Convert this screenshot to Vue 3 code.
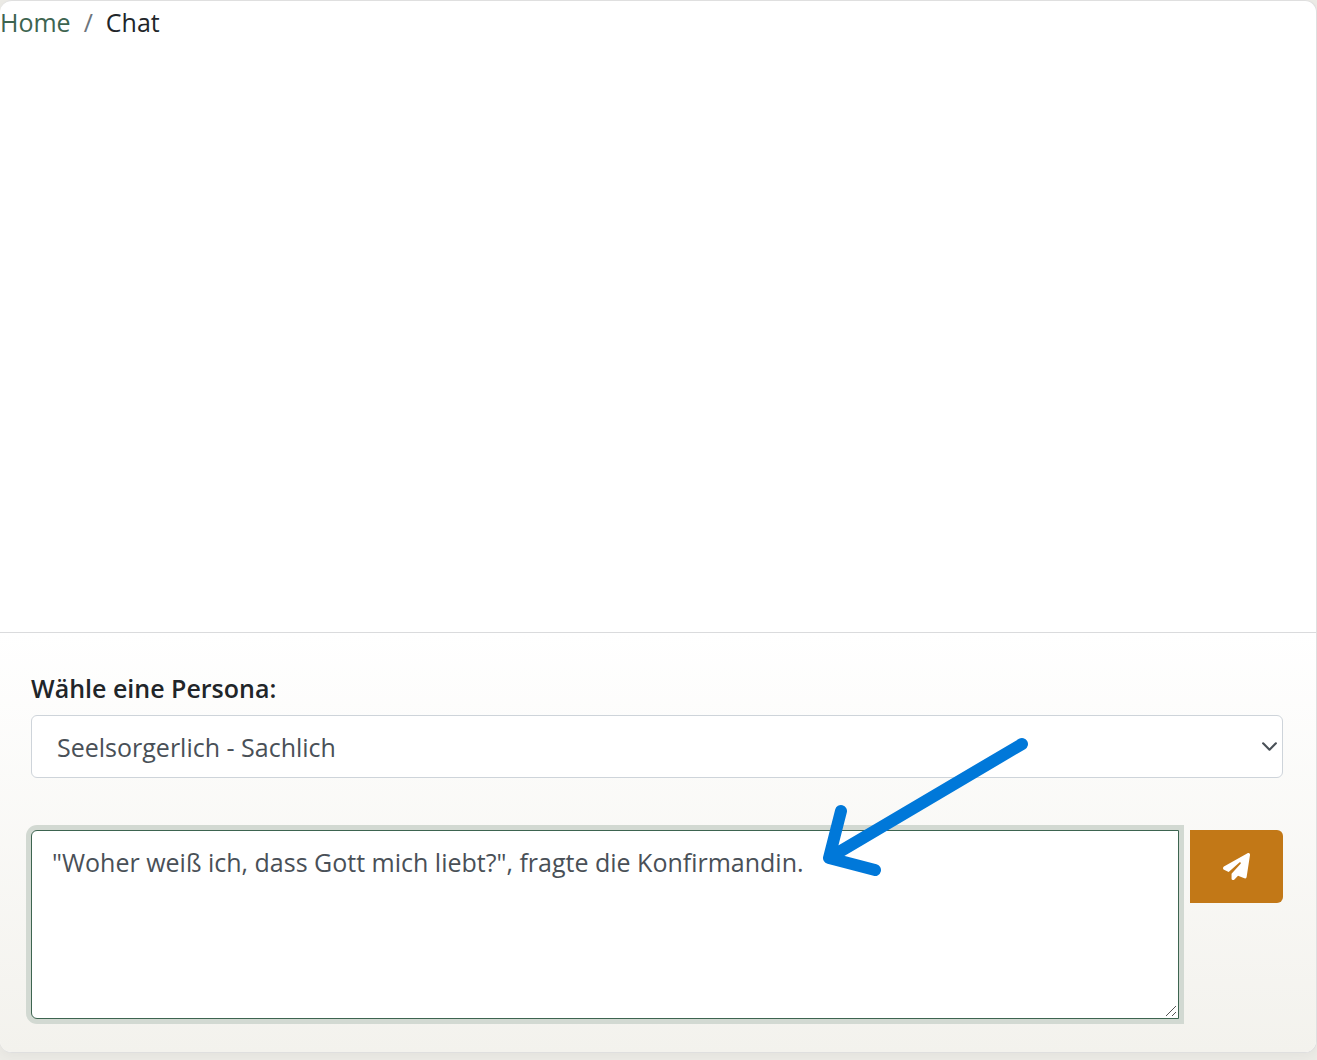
<script setup>
import { ref } from 'vue'

const personas = ['Seelsorgerlich - Sachlich']
const persona = ref(personas[0])
const message = ref('"Woher weiß ich, dass Gott mich liebt?", fragte die Konfirmandin.')
</script>

<template>
  <div class="page">
    <main class="card">
      <nav class="breadcrumb" aria-label="Breadcrumb">
        <a href="#">Home</a>
        <span class="divider">/</span>
        <span class="current">Chat</span>
      </nav>
      <section class="messages" aria-label="Chat"></section>
      <form class="composer" @submit.prevent>
        <label class="persona-label" for="persona">Wähle eine Persona:</label>
        <div class="select-wrap">
          <select id="persona" v-model="persona">
            <option v-for="name in personas" :key="name" :value="name">{{ name }}</option>
          </select>
          <svg class="chevron" viewBox="0 0 16 16" aria-hidden="true">
            <path d="m2 5 6 6 6-6" />
          </svg>
        </div>
        <div class="input-row">
          <div class="message-field">
            <textarea v-model="message" aria-label="Nachricht" spellcheck="false"></textarea>
            <svg class="grip" viewBox="0 0 12 12" aria-hidden="true">
              <path d="M1 11 11 1M7 11l4-4" />
            </svg>
          </div>
          <button type="submit" aria-label="Senden">
            <svg class="plane" viewBox="0 0 512 512" aria-hidden="true">
              <path d="M498 6c11 7 16 20 14 33l-64 416c-2 10-8 18-16 23s-18 5-27 2l-120-50-68 74c-9 10-23 13-35 8s-20-17-20-30v-84c0-4 2-8 4-11l168-183c6-6 5-16-1-22s-15-6-22-1L107 362l-88-45C8 311 0 300 0 288s6-24 17-31L465 4c10-6 23-5 33 2z" />
            </svg>
          </button>
          <svg class="arrow" viewBox="0 0 206 140" aria-hidden="true">
            <path d="M199 7 6 121M18 74 6 121l46 12" />
          </svg>
        </div>
      </form>
    </main>
  </div>
</template>

<style>
body {
  margin: 0;
  background: #eaeae5;
}
</style>

<style scoped>
.page,
.page * {
  box-sizing: border-box;
}

.page {
  display: flex;
  min-height: 100vh;
  padding-bottom: 7px;
  font-family: "Open Sans", "Noto Sans", sans-serif;
  font-size: 25px;
  line-height: 38px;
  color: #212529;
  background: #ecebe6;
}

.card {
  display: flex;
  flex: 1;
  flex-direction: column;
  min-width: 0;
  overflow: hidden;
  border: 1px solid #dfdfdf;
  border-left: 0;
  border-radius: 12px;
  background: #fff;
  box-shadow: 0 3px 12px rgba(0, 0, 0, 0.04);
}

.breadcrumb {
  display: flex;
  gap: 13px;
  padding-top: 2px;
}

.breadcrumb a {
  color: #3d6450;
  text-decoration: none;
}

.divider {
  color: #6c757d;
}

.messages {
  flex: 1;
}

.composer {
  padding: 36px 33px 33px 31px;
  border-top: 1px solid #dadbdd;
  background: linear-gradient(#fff, #f3f2ed);
}

.persona-label {
  display: block;
  margin-bottom: 8px;
  font-weight: 600;
}

.select-wrap {
  position: relative;
  margin-bottom: 52px;
}

select {
  display: block;
  width: 100%;
  height: 63px;
  padding: 0 48px 0 25px;
  border: 1px solid #ced4da;
  border-radius: 6px;
  appearance: none;
  background: #fff;
  color: #495057;
  font: inherit;
}

.chevron {
  position: absolute;
  top: 23px;
  right: 5px;
  width: 17px;
  height: 17px;
  fill: none;
  stroke: #495057;
  stroke-width: 2;
  stroke-linecap: round;
  stroke-linejoin: round;
}

.input-row {
  position: relative;
  display: flex;
  align-items: flex-start;
  gap: 11px;
}

.message-field {
  position: relative;
  flex: 1;
  min-width: 0;
}

textarea {
  display: block;
  width: 100%;
  height: 189px;
  padding: 12px 20px;
  border: 1px solid #3d6450;
  border-radius: 6px 0 0 6px;
  outline: 0;
  background: #fff;
  box-shadow: 0 0 0 5px #d2d9d2;
  color: #495057;
  font: inherit;
  resize: none;
}

.grip {
  position: absolute;
  right: 2px;
  bottom: 2px;
  width: 12px;
  height: 12px;
  fill: none;
  stroke: #555;
  stroke-width: 1;
}

button {
  display: flex;
  align-items: center;
  justify-content: center;
  width: 93px;
  height: 73px;
  padding: 0;
  border: 0;
  border-radius: 0 6px 6px 0;
  background: #c27817;
}

.plane {
  width: 27px;
  height: 27px;
  fill: #fff;
}

.arrow {
  position: absolute;
  top: -93px;
  right: 254px;
  width: 206px;
  height: 140px;
  overflow: visible;
  fill: none;
  stroke: #0078d9;
  stroke-width: 12;
  stroke-linecap: round;
  stroke-linejoin: round;
  pointer-events: none;
}
</style>
